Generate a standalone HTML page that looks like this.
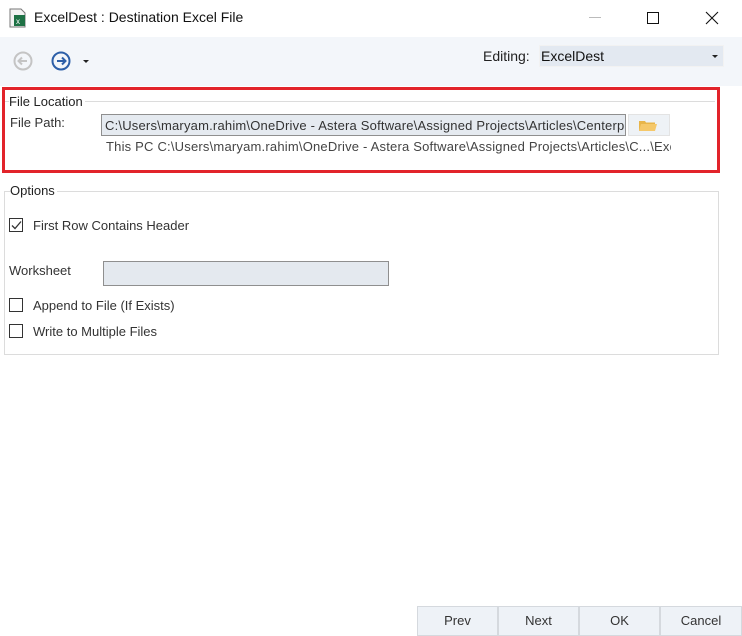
<!DOCTYPE html>
<html><head><style>
*{margin:0;padding:0;box-sizing:border-box}
body{width:742px;height:635px;background:#fff;position:relative;overflow:hidden;font-family:"Liberation Sans",sans-serif;font-size:12px;color:#222}
.a{position:absolute}
.t{font-size:13px;letter-spacing:0;white-space:nowrap}
.p{letter-spacing:0.2px}
.cb{position:absolute;width:14px;height:14px;border:1px solid #333;background:#fff}
.btn{position:absolute;top:606px;height:30px;width:81px;background:#eef2f7;border:1px solid #d5d9de;text-align:center;line-height:28px;font-size:13px;color:#333}
</style></head><body>
<svg class="a" style="left:9px;top:8px" width="18" height="20"><path d="M1 1h11l4 4v14H1z" fill="#f3f3f3" stroke="#777"/><rect x="5" y="7" width="11" height="11" fill="#1e7145"/><text x="7" y="16" font-size="8" fill="#fff" font-family="Liberation Sans">x</text></svg>
<div class="a" style="left:34px;top:9px;font-size:14px;color:#111">ExcelDest : Destination Excel File</div>
<div class="a" style="left:589px;top:17px;width:12px;height:1px;background:#bbb"></div>
<div class="a" style="left:647px;top:12px;width:12px;height:12px;border:1px solid #111"></div>
<svg class="a" style="left:705px;top:11px" width="14" height="14"><path d="M1 1L13 13M13 1L1 13" stroke="#111" stroke-width="1.1"/></svg>
<div class="a" style="left:0;top:37px;width:742px;height:49px;background:#f3f6fa"></div>
<svg class="a" style="left:13px;top:51px" width="20" height="20"><circle cx="10" cy="10" r="8.5" fill="none" stroke="#c4c4c4" stroke-width="2"/><path d="M14 10H6M9 6.5L5.5 10L9 13.5" fill="none" stroke="#c4c4c4" stroke-width="2"/></svg>
<svg class="a" style="left:51px;top:51px" width="20" height="20"><circle cx="10" cy="10" r="8.5" fill="none" stroke="#2d5fa8" stroke-width="2"/><path d="M6 10H14M11 6.5L14.5 10L11 13.5" fill="none" stroke="#2d5fa8" stroke-width="2"/></svg>
<div class="a" style="left:83px;top:60px;border-left:3px solid transparent;border-right:3px solid transparent;border-top:3px solid #222"></div>
<div class="a" style="left:483px;top:48px;font-size:14px;color:#222">Editing:</div>
<div class="a" style="left:539px;top:45px;width:185px;height:22px;background:#e3e9f1;border:1px solid #f2f2f2"></div>
<div class="a" style="left:541px;top:48px;font-size:14px;color:#111">ExcelDest</div>
<div class="a" style="left:712px;top:55px;border-left:3px solid transparent;border-right:3px solid transparent;border-top:3px solid #222"></div>
<div class="a" style="left:5px;top:101px;width:710px;height:1px;background:#dcdcdc"></div>
<div class="a t" style="left:9px;top:94px;background:#fff;padding-right:2px;color:#222">File Location</div>
<div class="a t" style="left:10px;top:115px;color:#333">File Path:</div>
<div class="a" style="left:101px;top:114px;width:525px;height:22px;background:#e5eaf0;border:1px solid #8f8f8f;overflow:hidden"><div class="t p" style="padding:3px 0 0 3px;color:#333">C:\Users\maryam.rahim\OneDrive - Astera Software\Assigned Projects\Articles\Centerp</div></div>
<div class="a" style="left:628px;top:114px;width:42px;height:22px;background:#eef2f6;border:1px solid #e3e3e3"></div>
<svg class="a" style="left:638px;top:118px" width="20" height="14"><path d="M1 3h6l1 1.5h9v8H1z" fill="#e8b54a"/><path d="M3 6h16l-2 7H1z" fill="#f5c86a"/></svg>
<div class="a t p" style="left:106px;top:139px;color:#444;width:565px;overflow:hidden">This PC C:\Users\maryam.rahim\OneDrive - Astera Software\Assigned Projects\Articles\C...\Exc</div>
<div class="a" style="left:2px;top:87px;width:718px;height:86px;border:3px solid #e2232a"></div>
<div class="a" style="left:4px;top:191px;width:715px;height:164px;border:1px solid #dcdcdc"></div>
<div class="a t" style="left:10px;top:183px;background:#fff;padding-right:2px;color:#222">Options</div>
<div class="cb" style="left:9px;top:218px"></div>
<svg class="a" style="left:10px;top:219px" width="13" height="13"><path d="M2 6.5L5 9.5L11 2.5" fill="none" stroke="#333" stroke-width="1.3"/></svg>
<div class="a t" style="left:33px;top:218px;color:#333">First Row Contains Header</div>
<div class="a t" style="left:9px;top:263px;color:#333">Worksheet</div>
<div class="a" style="left:103px;top:261px;width:286px;height:25px;background:#e4e9ef;border:1px solid #8f8f8f"></div>
<div class="cb" style="left:9px;top:298px"></div>
<div class="a t" style="left:33px;top:298px;color:#333">Append to File (If Exists)</div>
<div class="cb" style="left:9px;top:324px"></div>
<div class="a t" style="left:33px;top:324px;color:#333">Write to Multiple Files</div>
<div class="btn" style="left:417px">Prev</div>
<div class="btn" style="left:498px">Next</div>
<div class="btn" style="left:579px">OK</div>
<div class="btn" style="left:660px;width:82px">Cancel</div>
</body></html>
